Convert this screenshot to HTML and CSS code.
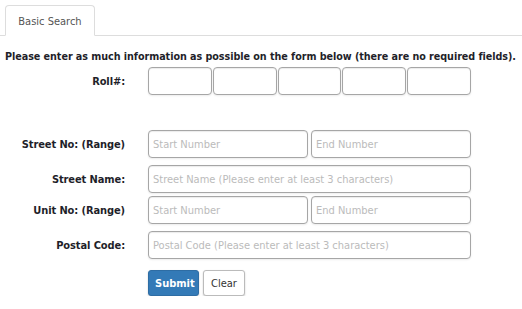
FILE: index.html
```html
<!DOCTYPE html>
<html>
<head>
<meta charset="utf-8">
<link rel="stylesheet" href="styles.css">
</head>
<body>
<div class="tabs">
  <div class="tab">Basic Search</div>
</div>
<p class="intro">Please enter as much information as possible on the form below (there are no required fields).</p>
<form class="form">
  <div class="row row-roll">
    <label class="lbl">Roll#:</label>
    <div class="fields">
      <input class="inp roll" type="text">
      <input class="inp roll" type="text">
      <input class="inp roll" type="text">
      <input class="inp roll" type="text">
      <input class="inp roll" type="text">
    </div>
  </div>
  <div class="row row-street">
    <label class="lbl">Street No: (Range)</label>
    <div class="fields pair">
      <input class="inp half" type="text" placeholder="Start Number">
      <input class="inp half" type="text" placeholder="End Number">
    </div>
  </div>
  <div class="row row-name">
    <label class="lbl">Street Name:</label>
    <div class="fields">
      <input class="inp full" type="text" placeholder="Street Name (Please enter at least 3 characters)">
    </div>
  </div>
  <div class="row row-unit">
    <label class="lbl">Unit No: (Range)</label>
    <div class="fields pair">
      <input class="inp half" type="text" placeholder="Start Number">
      <input class="inp half" type="text" placeholder="End Number">
    </div>
  </div>
  <div class="row row-postal">
    <label class="lbl">Postal Code:</label>
    <div class="fields">
      <input class="inp full" type="text" placeholder="Postal Code (Please enter at least 3 characters)">
    </div>
  </div>
  <div class="row row-btns">
    <span class="lbl"></span>
    <div class="fields btns">
      <button type="button" class="btn primary">Submit</button>
      <button type="button" class="btn plain">Clear</button>
    </div>
  </div>
</form>
</body>
</html>
```
FILE: styles.css
```css
* { box-sizing: border-box; }
body {
  margin: 0;
  background: #fff;
  font-family: "DejaVu Sans Condensed", "DejaVu Sans", sans-serif;
  font-size: 11px;
  color: #222;
}
.tabs {
  padding: 5px 0 0 5px;
  border-bottom: 1px solid #ddd;
  height: 36px;
  display: flex;
}
.tab {
  width: 90px;
  height: 31px;
  border: 1px solid #ddd;
  border-bottom: 1px solid #fff;
  border-radius: 4px 4px 0 0;
  background: #fff;
  color: #555;
  display: flex;
  align-items: center;
  justify-content: center;
  font-size: 11px;
  padding-top: 1px;
}
.intro {
  margin: 14px 0 0 5px;
  font-weight: bold;
  font-size: 10.7px;
  letter-spacing: -0.05px;
  line-height: 14px;
  color: #1f1f2a;
  white-space: nowrap;
}
.form { display: flex; flex-direction: column; }
.row {
  display: grid;
  grid-template-columns: 125px 323px;
  column-gap: 23px;
  align-items: center;
}
.lbl {
  text-align: right;
  font-weight: bold;
  color: #1f1f2a;
  letter-spacing: -0.1px;
}
.fields { display: flex; gap: 1px; }
.pair { gap: 3px; }
.row-roll { margin-top: 3px; }
.row-street { margin-top: 35px; }
.row-name { margin-top: 7px; }
.row-unit { margin-top: 3px; }
.row-postal { margin-top: 7px; }
.row-btns { margin-top: 11px; }
.inp {
  height: 28px;
  border: 1px solid #a6a6a6;
  border-radius: 4px;
  box-shadow: inset 0 1px 1px rgba(0,0,0,0.08), 0 1px 2px rgba(0,0,0,0.08);
  font-family: inherit;
  font-size: 11px;
  padding: 0 4px;
  color: #333;
  background: #fff;
}
.inp::placeholder { color: #bbb; }
.roll { width: 64px; flex: 1 1 0; min-width: 0; }
.half { flex: 1 1 0; min-width: 0; }
.full { width: 100%; }
.btns { gap: 4px; }
.btn {
  height: 26px;
  border-radius: 3px;
  font-family: inherit;
  font-size: 11px;
  padding: 0 6px;
  box-shadow: 0 1px 2px rgba(0,0,0,0.2);
}
.primary {
  background: #337ab7;
  border: 1px solid #2e6da4;
  color: #fff;
  font-weight: bold;
  width: 51px;
}
.plain {
  background: #fff;
  border: 1px solid #bbb;
  color: #333;
  width: 42px;
}
```
